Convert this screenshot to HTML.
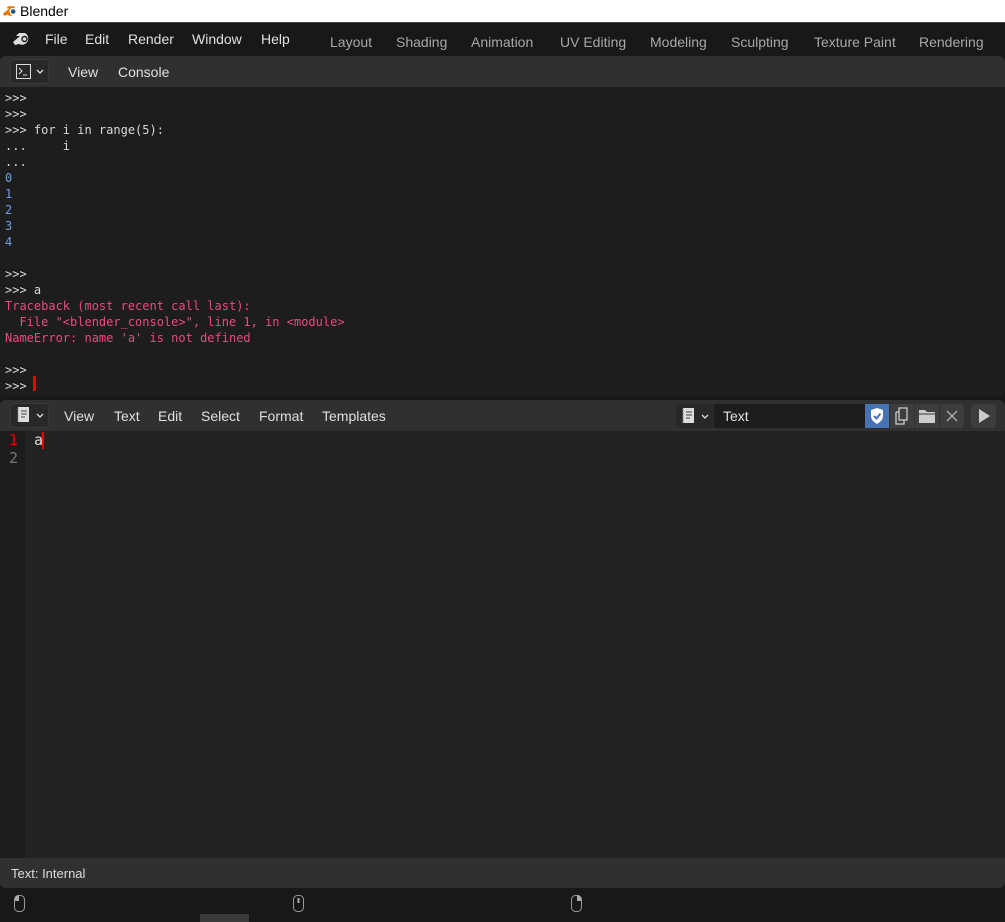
<!DOCTYPE html>
<html><head><style>
*{margin:0;padding:0;box-sizing:border-box}
body{width:1005px;height:922px;overflow:hidden;background:#181818;font-family:"Liberation Sans","DejaVu Sans",sans-serif;position:relative}
.abs{position:absolute}
.title{left:0;top:0;width:1005px;height:22px;background:#fff;color:#000;font-size:14px}
.top{left:0;top:22px;width:1005px;height:34px;background:#181818;border-top:1px solid #444}
.menu{color:#e0e0e0;font-size:14px}
.ws{color:#a8a8a8;font-size:14px;top:34px}
.hdr{background:#303030}
.con{left:0;top:87px;width:1005px;height:309px;background:#1d1d1d;border-radius:0 0 6px 6px}
.mono{font-family:"DejaVu Sans Mono","Liberation Mono",monospace;font-size:12px;line-height:16px;white-space:pre;color:#d8d8d8}
.b{color:#6a9fe6}.r{color:#ea4a7d}
.btn{background:#282828;border-radius:4px}
</style></head><body>
<div class="abs title">
<svg class="abs" style="left:2px;top:4px" width="17" height="14" viewBox="0 0 16 13"><path d="M1 9 L7 4 L4 4 L6 2 L11 2 A5 5 0 1 1 5 10 L2 11Z" fill="#ea7600"/><circle cx="10.5" cy="7" r="3.5" fill="#fff"/><circle cx="10.5" cy="7" r="2.2" fill="#265787"/></svg>
<span class="abs" style="left:20px;top:3px">Blender</span></div>
<div class="abs top">
<svg class="abs" style="left:12px;top:8px" width="20" height="17" viewBox="0 0 20 17"><path d="M1 11 L8 5 L4 5 L7 2 L13 2 A6 6 0 1 1 7 13 L3 14Z" fill="#ddd"/><circle cx="12.5" cy="8" r="3.2" fill="#181818"/><circle cx="12.5" cy="8" r="1.8" fill="#ddd"/></svg>
<span class="abs menu" style="left:45px;top:8px">File</span>
<span class="abs menu" style="left:85px;top:8px">Edit</span>
<span class="abs menu" style="left:128px;top:8px">Render</span>
<span class="abs menu" style="left:192px;top:8px">Window</span>
<span class="abs menu" style="left:261px;top:8px">Help</span>
</div>
<span class="abs ws" style="left:330px">Layout</span>
<span class="abs ws" style="left:396px">Shading</span>
<span class="abs ws" style="left:471px">Animation</span>
<span class="abs ws" style="left:560px">UV Editing</span>
<span class="abs ws" style="left:650px">Modeling</span>
<span class="abs ws" style="left:731px">Sculpting</span>
<span class="abs ws" style="left:814px">Texture Paint</span>
<span class="abs ws" style="left:919px">Rendering</span>

<div class="abs hdr" style="left:0;top:56px;width:1005px;height:31px;border-radius:6px 6px 0 0"></div>
<div class="abs btn" style="left:10px;top:59px;width:39px;height:25px;border:1px solid #3a3a3a"></div>
<svg class="abs" style="left:15px;top:63px" width="32" height="17"><rect x="1.5" y="1.5" width="14" height="14" fill="none" stroke="#ddd"/><path d="M4 5 L7 8 L4 11 M8 12 H12" stroke="#ddd" fill="none"/><path d="M22 7 L25 10 L28 7" stroke="#ddd" fill="none" stroke-width="1.3"/></svg>
<span class="abs menu" style="left:68px;top:64px">View</span>
<span class="abs menu" style="left:118px;top:64px">Console</span>

<div class="abs con mono" style="padding:3px 0 0 5px">&gt;&gt;&gt;
&gt;&gt;&gt;
&gt;&gt;&gt; for i in range(5):
...     i
...
<span class="b">0
1
2
3
4</span>

&gt;&gt;&gt;
&gt;&gt;&gt; a
<span class="r">Traceback (most recent call last):
  File "&lt;blender_console&gt;", line 1, in &lt;module&gt;
NameError: name 'a' is not defined</span>

&gt;&gt;&gt;
&gt;&gt;&gt; </div>
<div class="abs" style="left:33px;top:376px;width:3px;height:15px;background:#e00"></div>

<div class="abs hdr" style="left:0;top:400px;width:1005px;height:31px;border-radius:6px 6px 0 0"></div>
<div class="abs btn" style="left:10px;top:403px;width:39px;height:25px;border:1px solid #3a3a3a"></div>
<svg class="abs" style="left:15px;top:406px" width="32" height="18"><rect x="3" y="1" width="11" height="15" fill="#ddd"/><path d="M2 3h2M2 6h2M2 9h2M2 12h2M2 15h2" stroke="#888"/><path d="M6 5h6M6 8h6M6 11h4" stroke="#444"/><path d="M22 8 L25 11 L28 8" stroke="#ddd" fill="none" stroke-width="1.3"/></svg>
<span class="abs menu" style="left:64px;top:408px">View</span>
<span class="abs menu" style="left:114px;top:408px">Text</span>
<span class="abs menu" style="left:158px;top:408px">Edit</span>
<span class="abs menu" style="left:201px;top:408px">Select</span>
<span class="abs menu" style="left:259px;top:408px">Format</span>
<span class="abs menu" style="left:322px;top:408px">Templates</span>
<div class="abs btn" style="left:676px;top:404px;width:38px;height:24px"></div>
<svg class="abs" style="left:680px;top:407px" width="32" height="18"><rect x="3" y="1" width="11" height="15" fill="#ddd"/><path d="M2 3h2M2 6h2M2 9h2M2 12h2M2 15h2" stroke="#888"/><path d="M6 5h6M6 8h6M6 11h4" stroke="#444"/><path d="M22 8 L25 11 L28 8" stroke="#ddd" fill="none" stroke-width="1.3"/></svg>
<div class="abs" style="left:714px;top:404px;width:151px;height:24px;background:#1d1d1d"></div>
<span class="abs menu" style="left:723px;top:408px">Text</span>
<div class="abs" style="left:865px;top:404px;width:24px;height:24px;background:#4772b3"></div>
<svg class="abs" style="left:869px;top:407px" width="16" height="18"><path d="M8 1 L14 3 V9 C14 13 11 15 8 17 C5 15 2 13 2 9 V3Z" fill="#fff"/><path d="M5 9 L7.5 11.5 L11.5 6.5" stroke="#4772b3" stroke-width="2" fill="none"/></svg>
<div class="abs" style="left:890px;top:404px;width:24px;height:24px;background:#3d3d3d"></div>
<svg class="abs" style="left:893px;top:407px" width="18" height="18"><path d="M6 1h8v12h-8z M3 5h3 M3 5v12h8v-4" stroke="#ccc" fill="none" stroke-width="1.3"/></svg>
<div class="abs" style="left:915px;top:404px;width:24px;height:24px;background:#3d3d3d"></div>
<svg class="abs" style="left:918px;top:408px" width="18" height="16"><path d="M1 2h6l2 2h8v11H1z" fill="#ccc"/><path d="M1 6h16" stroke="#3d3d3d"/></svg>
<div class="abs" style="left:940px;top:404px;width:24px;height:24px;background:#3d3d3d;border-radius:0 4px 4px 0"></div>
<svg class="abs" style="left:945px;top:409px" width="14" height="14"><path d="M2 2L12 12M12 2L2 12" stroke="#aaa" stroke-width="1.4"/></svg>
<div class="abs" style="left:971px;top:404px;width:25px;height:24px;background:#3d3d3d;border-radius:4px"></div>
<svg class="abs" style="left:976px;top:407px" width="16" height="18"><path d="M3 2 L14 9 L3 16Z" fill="#ccc"/></svg>

<div class="abs" style="left:0;top:431px;width:1005px;height:427px;background:#232323"></div>
<div class="abs" style="left:0;top:431px;width:25px;height:427px;background:#1c1c1c"></div>
<div class="abs mono" style="left:9px;top:431px;font-size:15px;line-height:18px;color:#777"><span style="color:#e00">1</span>
2</div>
<div class="abs mono" style="left:34px;top:431px;font-size:15px;line-height:18px;color:#ddd">a</div>
<div class="abs" style="left:42px;top:432px;width:2px;height:17px;background:#e00"></div>

<div class="abs hdr" style="left:0;top:858px;width:1005px;height:30px;border-radius:0 0 6px 6px"></div>
<span class="abs" style="left:11px;top:866px;font-size:13px;color:#ddd">Text: Internal</span>

<svg class="abs" style="left:13px;top:894px" width="14" height="20"><rect x="1.5" y="1.5" width="10" height="16" rx="4" fill="none" stroke="#999"/><path d="M2 7V5a4 4 0 0 1 4-4V7Z" fill="#aaa"/></svg>
<svg class="abs" style="left:292px;top:894px" width="14" height="20"><rect x="1.5" y="1.5" width="10" height="16" rx="4" fill="none" stroke="#999"/><rect x="5.5" y="4" width="2" height="5" fill="#aaa"/></svg>
<svg class="abs" style="left:570px;top:894px" width="14" height="20"><rect x="1.5" y="1.5" width="10" height="16" rx="4" fill="none" stroke="#999"/><path d="M7 1a4 4 0 0 1 4 4V7H7Z" fill="#aaa"/></svg>
<div class="abs" style="left:200px;top:914px;width:49px;height:8px;background:#3a3a3a"></div>
</body></html>
